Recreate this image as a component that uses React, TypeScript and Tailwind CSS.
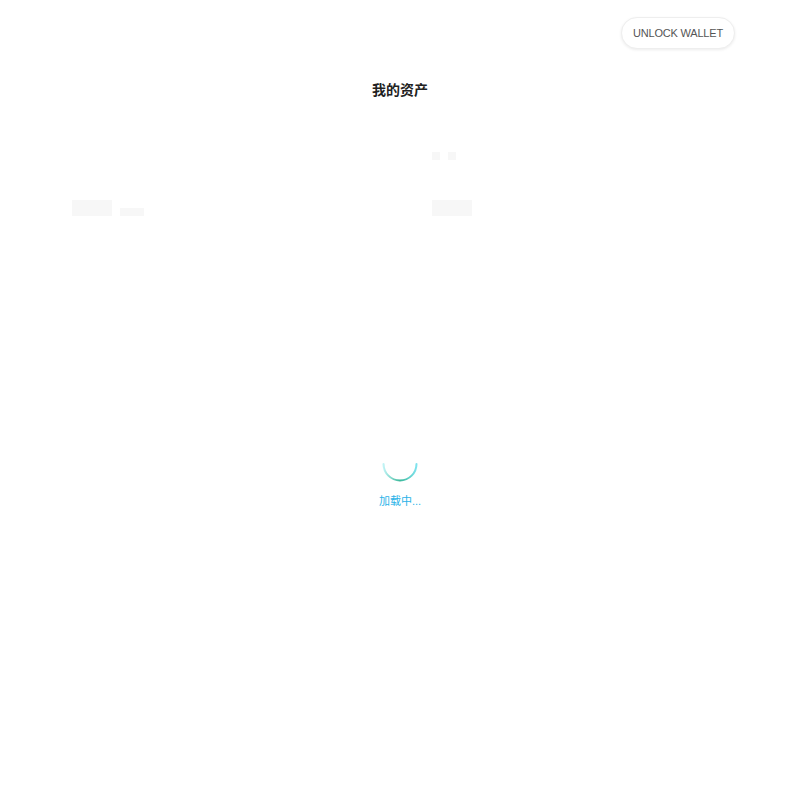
import React from 'react';

const FONT = { fontFamily: '"Liberation Sans", "Noto Sans CJK SC", sans-serif' };

function Spinner() {
  return (
    <svg width="36" height="36" viewBox="0 0 36 36" fill="none">
      <defs>
        <linearGradient id="arc" x1="0" y1="0" x2="1" y2="0">
          <stop offset="0%" stopColor="#bff3f5" />
          <stop offset="50%" stopColor="#3bb89a" />
          <stop offset="100%" stopColor="#7fe3ee" />
        </linearGradient>
      </defs>
      <path d="M1.5 16 A16.5 16.5 0 0 0 34.5 16" stroke="url(#arc)" strokeWidth="2" strokeLinecap="round" />
    </svg>
  );
}

export default function App() {
  return (
    <div className="min-h-screen w-full bg-white" style={FONT}>
      <header className="flex justify-end pt-[17px] pr-[65px]">
        <button className="h-8 w-[114px] rounded-full border border-[#eeeeee] bg-white text-[11px] tracking-[-0.2px] uppercase text-[#555] shadow-[0_1px_3px_rgba(0,0,0,0.08)]">
          Unlock Wallet
        </button>
      </header>

      <h1 className="mt-[31px] text-center text-sm font-bold leading-5 text-[#222]">我的资产</h1>

      <section className="mt-[52px] grid grid-cols-2 gap-16 px-[72px]">
        <div>
          <div className="h-2" />
          <div className="mt-10 flex items-end gap-2">
            <div className="h-4 w-10 bg-[#f7f7f7]" />
            <div className="h-2 w-6 bg-[#f7f7f7]" />
          </div>
        </div>
        <div>
          <div className="flex gap-2">
            <div className="h-2 w-2 bg-[#f7f7f7]" />
            <div className="h-2 w-2 bg-[#f7f7f7]" />
          </div>
          <div className="mt-10 h-4 w-10 bg-[#f7f7f7]" />
        </div>
      </section>

      <div className="mt-[232px] flex flex-col items-center">
        <Spinner />
        <p className="mt-[9px] text-[11px] text-[#2bb3e8]">加载中...</p>
      </div>
    </div>
  );
}
